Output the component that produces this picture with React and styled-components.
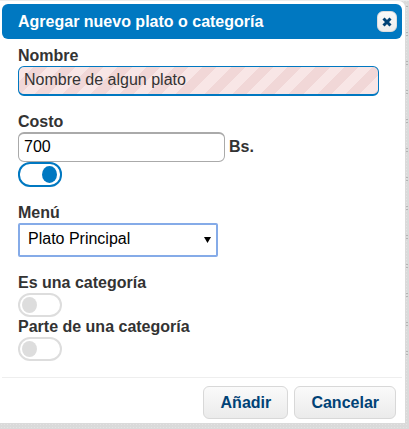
import React, { useState } from "react";
import styled, { createGlobalStyle } from "styled-components";

const GlobalStyle = createGlobalStyle`
  *, *::before, *::after { box-sizing: border-box; }
  body {
    margin: 0;
    background-color: #dadada;
    background-image: radial-gradient(circle, #e3e3e3 1px, transparent 1px);
    background-size: 3px 3px;
    color: #333;
    font: 16px/20px "Liberation Sans", Arial, sans-serif;
  }
  button, input, select { font: inherit; }
`;

const Page = styled.div`
  display: grid;
  grid-template-columns: minmax(0, 1fr) 4px;
  min-height: 100vh;
  align-items: start;
  border-top: 1px solid #ececec;
  overflow: hidden;
`;

const Dialog = styled.section`
  padding: 3px 3px 4px 2px;
  background: #fff;
  border-radius: 0 6px 0 0;
`;

const TableEdge = styled.div`
  align-self: stretch;
  margin: 5px 1px 72px 1px;
  background: repeating-linear-gradient(
    #b4b4b4 0 1px,
    transparent 1px 26px,
    #b4b4b4 26px 27px,
    transparent 27px 29px
  );
`;

const TitleBar = styled.header`
  display: flex;
  align-items: center;
  justify-content: space-between;
  height: 35px;
  padding: 0 5px 0 16px;
  border-radius: 6px;
  background: #0078c1;
  color: #fff;
`;

const Title = styled.h1`
  margin: 0;
  font-size: 16px;
  line-height: 20px;
`;

const CloseButton = styled.button`
  display: grid;
  place-items: center;
  width: 20px;
  height: 21px;
  padding: 0;
  border: 1px solid #ddd;
  border-radius: 6px;
  background: linear-gradient(#fafafa, #ededed);
  color: #004276;
`;

const Form = styled.form`
  display: flex;
  flex-direction: column;
`;

const Fields = styled.div`
  display: flex;
  flex-direction: column;
  gap: 16px;
  padding: 7px 23px 16px 16px;
`;

const Field = styled.div`
  display: flex;
  flex-direction: column;
  align-items: flex-start;
`;

const Label = styled.label`
  font-weight: bold;
  line-height: 20px;
`;

const InputRow = styled.div`
  display: flex;
  align-items: center;
  gap: 4px;
`;

const TextInput = styled.input`
  width: ${({ $wide }) => ($wide ? "100%" : "207px")};
  height: 30px;
  padding: 0 5px 2px;
  border: 1px solid ${({ $invalid }) => ($invalid ? "#0078c1" : "#aaa")};
  border-width: ${({ $invalid }) => ($invalid ? "1px 1px 2px" : "2px 1px 1px")};
  border-radius: 6px;
  outline: 0;
  color: ${({ $invalid }) => ($invalid ? "#333" : "#000")};
  background: ${({ $invalid }) =>
    $invalid
      ? "repeating-linear-gradient(135deg, #f8e6e6 0 10px, #f1d7d7 10px 20px)"
      : "#fff"};
`;

const SelectBox = styled.div`
  display: grid;
  width: 200px;
  height: 34px;
  align-items: center;

  > * { grid-area: 1 / 1; }
  svg { justify-self: end; margin-right: 7px; pointer-events: none; }
`;

const Select = styled.select`
  width: 100%;
  height: 34px;
  padding: 0 20px 2px 8px;
  appearance: none;
  border: 2px solid #85abe8;
  border-radius: 2px;
  outline: 0;
  background: #fff;
  color: #000;
`;

const Toggle = styled.input`
  appearance: none;
  display: flex;
  align-items: center;
  justify-content: flex-start;
  width: 44px;
  height: 24px;
  margin: 0;
  padding: 0 2px;
  border: 2px solid #ddd;
  border-radius: 12px;
  background: #fff;

  &::before {
    content: "";
    width: 15px;
    height: 16px;
    border-radius: 50%;
    background: #ddd;
  }
  &:checked {
    justify-content: flex-end;
    height: 25px;
    padding-right: 3px;
    border-color: #0078c1;
  }
  &:checked::before { height: 17px; background: #0078c1; }
`;

const ToggleGroup = styled.div`
  display: flex;
  flex-direction: column;
`;

const Actions = styled.footer`
  display: flex;
  justify-content: flex-end;
  gap: 6px;
  padding: 8px 6px 0;
  border-top: 1px solid #eee;
`;

const ActionButton = styled.button`
  min-width: 85px;
  height: 33px;
  padding: 0 16px;
  border: 1px solid #d8d8d8;
  border-radius: 6px;
  background: linear-gradient(#fafafa, #ebebeb);
  color: #004276;
  font-weight: bold;
`;

function ToggleField({ id, label }) {
  return (
    <Field>
      <Label htmlFor={id}>{label}</Label>
      <Toggle id={id} type="checkbox" />
    </Field>
  );
}

export default function App() {
  const [name, setName] = useState("Nombre de algun plato");
  const [cost, setCost] = useState("700");

  return (
    <Page>
      <GlobalStyle />
      <Dialog role="dialog" aria-labelledby="dialog-title">
        <TitleBar>
          <Title id="dialog-title">Agregar nuevo plato o categoría</Title>
          <CloseButton type="button" aria-label="Cerrar">
            <svg width="10" height="10" viewBox="0 0 10 10" aria-hidden="true">
              <path d="M1.5 1.5 8.5 8.5M8.5 1.5 1.5 8.5" stroke="currentColor" strokeWidth="3" />
            </svg>
          </CloseButton>
        </TitleBar>
        <Form onSubmit={(event) => event.preventDefault()}>
          <Fields>
            <Field>
              <Label htmlFor="name">Nombre</Label>
              <TextInput
                id="name"
                $wide
                $invalid
                aria-invalid="true"
                value={name}
                onChange={(event) => setName(event.target.value)}
              />
            </Field>
            <Field>
              <Label htmlFor="cost">Costo</Label>
              <InputRow>
                <TextInput id="cost" value={cost} onChange={(event) => setCost(event.target.value)} />
                <Label htmlFor="cost">Bs.</Label>
              </InputRow>
              <Toggle type="checkbox" defaultChecked aria-label="Costo activo" />
            </Field>
            <Field>
              <Label htmlFor="menu">Menú</Label>
              <SelectBox>
                <Select id="menu">
                  <option>Plato Principal</option>
                </Select>
                <svg width="7" height="6" viewBox="0 0 7 6" aria-hidden="true">
                  <path d="M0 0H7L3.5 6Z" fill="#000" />
                </svg>
              </SelectBox>
            </Field>
            <ToggleGroup>
              <ToggleField id="is-category" label="Es una categoría" />
              <ToggleField id="in-category" label="Parte de una categoría" />
            </ToggleGroup>
          </Fields>
          <Actions>
            <ActionButton type="submit">Añadir</ActionButton>
            <ActionButton type="button">Cancelar</ActionButton>
          </Actions>
        </Form>
      </Dialog>
      <TableEdge />
    </Page>
  );
}
